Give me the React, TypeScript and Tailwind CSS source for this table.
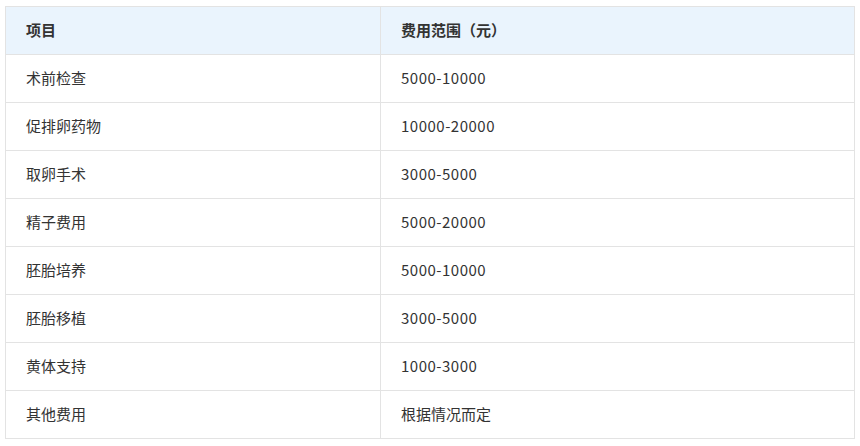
import React from "react";

const rows = [
  ["术前检查", "5000-10000"],
  ["促排卵药物", "10000-20000"],
  ["取卵手术", "3000-5000"],
  ["精子费用", "5000-20000"],
  ["胚胎培养", "5000-10000"],
  ["胚胎移植", "3000-5000"],
  ["黄体支持", "1000-3000"],
  ["其他费用", "根据情况而定"],
];

export default function App() {
  return (
    <div className="min-h-[446px] bg-white pt-[6px] pl-[5px] font-['Microsoft_YaHei','Noto_Sans_CJK_SC',sans-serif] text-[15px] text-[#333]">
      <div className="grid w-[850px] grid-cols-[375px_474px] border-l border-t border-[#e3e3e3]">
        <div className="flex h-[48px] items-center border-b border-r border-[#e3e3e3] bg-[#eaf4fd] pl-[20px] font-bold">
          项目
        </div>
        <div className="flex h-[48px] items-center border-b border-r border-[#e3e3e3] bg-[#eaf4fd] pl-[20px] font-bold">
          费用范围（元）
        </div>
        {rows.map(([name, cost]) => (
          <React.Fragment key={name}>
            <div className="flex h-[48px] items-center border-b border-r border-[#e3e3e3] pl-[20px]">
              {name}
            </div>
            <div
              className={
                "flex h-[48px] items-center border-b border-r border-[#e3e3e3] pl-[20px]" +
                (/\d/.test(cost) ? " tracking-[0.5px]" : "")
              }
            >
              {cost}
            </div>
          </React.Fragment>
        ))}
      </div>
    </div>
  );
}
